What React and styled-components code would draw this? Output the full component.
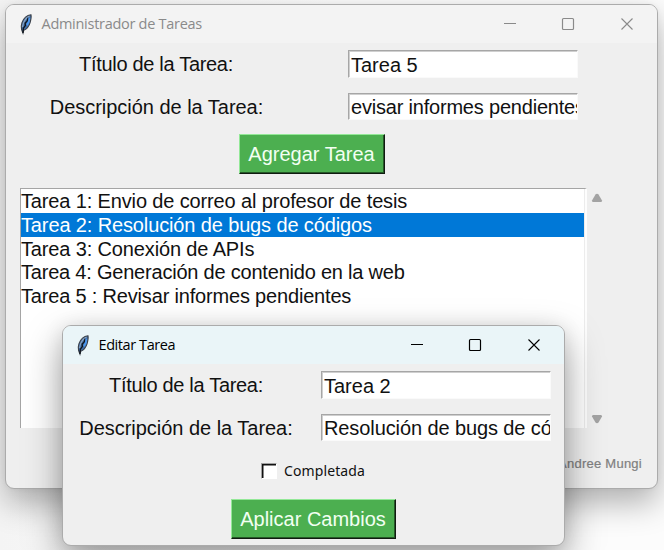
import React from "react";
import styled, { createGlobalStyle } from "styled-components";

const GlobalStyle = createGlobalStyle`
  * { box-sizing: border-box; }
  html, body { margin: 0; height: 100%; overflow: hidden; background: #fbfbfb; }
`;

const Desktop = styled.main`
  position: relative;
  width: 664px;
  height: 550px;
  overflow: hidden;
  background: linear-gradient(90deg, #f4f4f4, #fcfcfc 50%);
  font-family: "Liberation Sans", Arial, sans-serif;
  font-size: 20px;
  color: #111;
`;

const Window = styled.section`
  position: absolute;
  left: ${(p) => p.$x}px;
  top: ${(p) => p.$y}px;
  width: ${(p) => p.$w}px;
  height: ${(p) => p.$h}px;
  display: flex;
  flex-direction: column;
  overflow: hidden;
  border: 1px solid #ababab;
  border-radius: 9px;
  background: #efefef;
  box-shadow: ${(p) =>
    p.$active
      ? "0 16px 38px rgba(0,0,0,.36), 0 2px 20px rgba(0,0,0,.1)"
      : "0 14px 32px rgba(0,0,0,.3), 0 0 5px rgba(0,0,0,.05)"};
`;

const TitleBar = styled.header`
  flex: none;
  display: flex;
  align-items: center;
  height: 38px;
  padding-left: 12px;
  background: ${(p) => (p.$active ? "#eaf5f8" : "#f3f3f3")};
  color: ${(p) => (p.$active ? "#000" : "#8a8a8a")};
`;

const Title = styled.h1`
  flex: 1;
  margin: 0 0 0 7.5px;
  font: 400 14.5px/20px "Open Sans", "Noto Sans", sans-serif;
  letter-spacing: ${(p) => p.$spacing || 0}px;
  white-space: nowrap;
`;

const Controls = styled.div`
  display: flex;
  gap: 34.5px;
  margin-right: 18.5px;
  svg { display: block; width: 24px; height: 24px; }
`;

const Feather = styled.svg`
  width: 16px;
  height: 22px;
`;

const Form = styled.div`
  flex: none;
  display: grid;
  grid-template-columns: ${(p) => p.$label}px 230px;
  grid-template-rows: 28px 27px;
  row-gap: 15px;
  padding-top: 7px;
`;

const Label = styled.label`
  padding-right: ${(p) => p.$inset}px;
  line-height: 28px;
  text-align: center;
  white-space: nowrap;
  letter-spacing: ${(p) => p.$spacing || 0}px;
`;

const Field = styled.div`
  overflow: hidden;
  border: 1px solid #fafafa;
  border-top-color: #a6a6a6;
  border-left-color: #a6a6a6;
  box-shadow: inset 1px 1px 0 #cfcfcf;
  background: #fff;
  padding: ${(p) => (p.$tight ? 0 : 1)}px 0 0 2px;
  line-height: 26px;
  white-space: nowrap;
  letter-spacing: ${(p) => p.$spacing || 0}px;
`;

const ActionButton = styled.button`
  flex: none;
  width: ${(p) => p.$w}px;
  height: 40px;
  margin: ${(p) => p.$margin};
  padding: 1px 1px 0 0;
  border: 1px solid;
  border-color: #93e897 #101b10 #101b10 #93e897;
  box-shadow: inset -1px -1px 0 #265828;
  background: #4caf50;
  color: #f2fff2;
  font: inherit;
  line-height: 37px;
  white-space: nowrap;
`;

const ListArea = styled.div`
  flex: none;
  display: flex;
  gap: 4px;
  height: 240px;
  margin: 14px 0 0 14px;
`;

const ListBox = styled.ul`
  width: 567px;
  margin: 0;
  padding: 0;
  list-style: none;
  background: #fff;
  border: 1px solid #a5a5a5;
  border-right: 2px solid #fdfdfd;
  border-bottom: 0;
  box-shadow: inset -1px 0 0 #ececec;
`;

const ListItem = styled.li`
  height: 23.8px;
  margin-right: 1px;
  line-height: 24px;
  white-space: nowrap;
  letter-spacing: ${(p) => p.$spacing || 0}px;
  background: ${(p) => (p.$selected ? "#0078d7" : "transparent")};
  color: ${(p) => (p.$selected ? "#fff" : "inherit")};
`;

const ScrollBar = styled.div`
  display: flex;
  flex-direction: column;
  justify-content: space-between;
  padding: 5px 0 4px;
  svg { display: block; width: 12px; height: 10px; fill: #a3a3a3; }
`;

const Credit = styled.footer`
  margin: 28px 15px 0 0;
  text-align: right;
  font: 400 13px/16px "Liberation Sans", sans-serif;
  letter-spacing: 0.25px;
  color: #808080;
  -webkit-text-stroke: 0.2px #808080;
`;

const CheckRow = styled.label`
  flex: none;
  display: flex;
  align-items: center;
  gap: 7px;
  height: 20px;
  margin: 20px 0 0 198px;
  font: 400 14px/20px "Noto Sans", sans-serif;
  letter-spacing: 0.1px;
`;

const CheckBox = styled.span`
  width: 16px;
  height: 16px;
  border: 1px solid #a0a0a0;
  border-right-color: #fff;
  border-bottom-color: #fff;
  background: #fff;
  box-shadow: inset 1.5px 1.5px 0 #111;
`;

const FeatherIcon = () => (
  <Feather viewBox="0 0 16 22" aria-hidden="true">
    <path d="M13 1.8C9.5 2.2 5.6 5.2 4 9.6c-1 2.8-1 4.7-.4 7l1.4 3.6.8-3c3-1.2 5.3-4.1 6.3-7.6.7-2.5 1.4-5.6.9-7.8Z" fill="#3f6da8" stroke="#3b4048" strokeWidth="1.1" />
    <path d="M11.5 3C7.6 5.2 5.2 9 4.5 14" fill="none" stroke="#8fa6c0" strokeWidth="1.1" />
    <path d="M10.2 4.7 9.1 8.2 7.2 10l.1 2.6-1.9 2.6-.5 4.6" fill="none" stroke="#10151c" strokeWidth="1.4" />
    <path d="M11.4 4.8c.2 2.4-.8 5-2.4 7.4" fill="none" stroke="#4b97ee" strokeWidth="1.8" />
  </Feather>
);

const WindowControls = () => (
  <Controls>
    <svg viewBox="0 0 24 24" fill="none" stroke="currentColor"><path d="M6 11.5h12" /></svg>
    <svg viewBox="0 0 24 24" fill="none" stroke="currentColor" strokeWidth="1.2"><rect x="6.5" y="6.5" width="11" height="11" rx="1" /></svg>
    <svg viewBox="0 0 24 24" fill="none" stroke="currentColor" strokeWidth="1.1"><path d="m6.5 6.5 11 11m0-11-11 11" /></svg>
  </Controls>
);

const tasks = [
  { text: "Tarea 1: Envio de correo al profesor de tesis", spacing: -0.14 },
  { text: "Tarea 2: Resolución de bugs de códigos", spacing: -0.13, selected: true },
  { text: "Tarea 3: Conexión de APIs", spacing: -0.14 },
  { text: "Tarea 4: Generación de contenido en la web", spacing: -0.21 },
  { text: "Tarea 5 : Revisar informes pendientes", spacing: -0.18 },
];

export default function App() {
  return (
    <>
      <GlobalStyle />
      <Desktop>
        <Window $x={5} $y={4} $w={653} $h={485}>
          <TitleBar>
            <FeatherIcon />
            <Title $spacing={-0.28}>Administrador de Tareas</Title>
            <WindowControls />
          </TitleBar>
          <Form $label={342}>
            <Label $inset={42} $spacing={-0.31}>Título de la Tarea:</Label>
            <Field>Tarea 5</Field>
            <Label $inset={41} $spacing={-0.03}>Descripción de la Tarea:</Label>
            <Field $tight $spacing={-0.2}>evisar informes pendientes</Field>
          </Form>
          <ActionButton $w={146} $margin="14px 0 0 233px">Agregar Tarea</ActionButton>
          <ListArea>
            <ListBox>
              {tasks.map((t) => (
                <ListItem key={t.text} $selected={t.selected} $spacing={t.spacing}>{t.text}</ListItem>
              ))}
            </ListBox>
            <ScrollBar>
              <svg viewBox="0 0 12 10"><path d="M4.5 1.5Q6 .2 7.5 1.5L11 7.5Q11 9 10 9H2Q1 9 1 7.5Z" /></svg>
              <svg viewBox="0 0 12 10"><path d="M4.5 8.5Q6 9.8 7.5 8.5L11 2.5Q11 1 10 1H2Q1 1 1 2.5Z" /></svg>
            </ScrollBar>
          </ListArea>
          <Credit>Andree Mungi</Credit>
        </Window>

        <Window $x={62} $y={325} $w={503} $h={221} $active>
          <TitleBar $active>
            <FeatherIcon />
            <Title $spacing={-0.42}>Editar Tarea</Title>
            <WindowControls />
          </TitleBar>
          <Form $label={258}>
            <Label $inset={12} $spacing={-0.31}>Título de la Tarea:</Label>
            <Field>Tarea 2</Field>
            <Label $inset={12} $spacing={-0.03}>Descripción de la Tarea:</Label>
            <Field $tight $spacing={-0.1}>Resolución de bugs de có</Field>
          </Form>
          <CheckRow><CheckBox />Completada</CheckRow>
          <ActionButton $w={165} $margin="18px 0 0 168px">Aplicar Cambios</ActionButton>
        </Window>
      </Desktop>
    </>
  );
}
